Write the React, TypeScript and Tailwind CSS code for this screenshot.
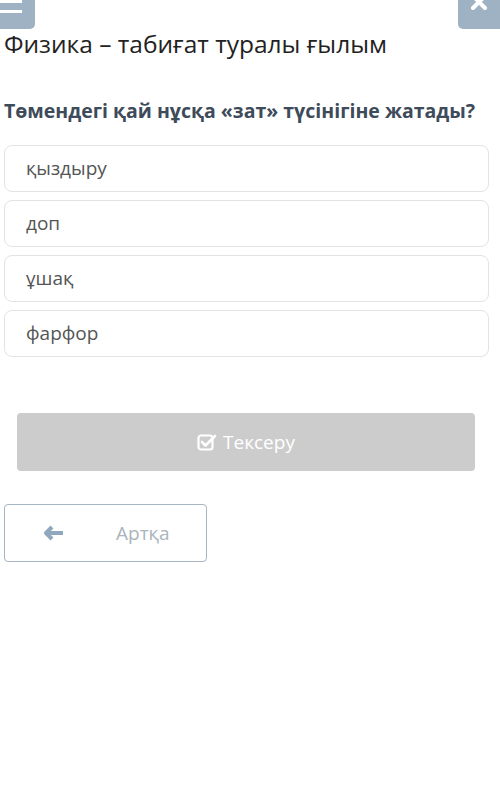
import React from "react";

export default function App() {
  const options = ["қыздыру", "доп", "ұшақ", "фарфор"];
  return (
    <div className="relative w-[500px] h-[786px] bg-white overflow-hidden" style={{ fontFamily: '"Open Sans", "Noto Sans", sans-serif' }}>
      <div className="absolute left-0 top-0 w-[35px] h-[29px] bg-[#9fb2c3] rounded-br-[5px]">
        <div className="absolute left-0 top-0 w-[22px] h-[3px] bg-white" />
        <div className="absolute left-0 top-[10px] w-[22px] h-[3px] bg-white" />
      </div>
      <div className="absolute right-0 top-0 w-[42px] h-[29px] bg-[#9fb2c3] rounded-bl-[5px] flex justify-center">
        <svg width="20" height="14" viewBox="0 0 20 14" className="mt-0">
          <path d="M4 -4 L16 8 M16 -4 L4 8" stroke="white" strokeWidth="4" strokeLinecap="round" />
        </svg>
      </div>

      <div className="pt-[28px] px-[4px]">
        <h1 className="text-[24.5px] leading-[32px] text-[#222] font-normal whitespace-nowrap">Физика – табиғат туралы ғылым</h1>
        <p className="mt-[38px] text-[19.5px] leading-[26px] font-bold text-[#3d4b5a] whitespace-nowrap">Төмендегі қай нұсқа «зат» түсінігіне жатады?</p>
        <div className="mt-[21px] flex flex-col gap-[8px] w-[485px]">
          {options.map((o) => (
            <div key={o} className="h-[47px] border border-[#e3e3e3] rounded-[8px] flex items-center pl-[21px] text-[19px] text-[#555]">
              {o}
            </div>
          ))}
        </div>
        <div className="mt-[56px] ml-[13px] w-[458px] h-[58px] bg-[#cccccc] rounded-[4px] flex items-center justify-center gap-[6px] text-white text-[19px]">
          <svg width="20" height="18" viewBox="0 0 20 18" fill="none">
            <rect x="1.5" y="2.5" width="14" height="14" rx="2.5" stroke="white" strokeWidth="2.2" />
            <path d="M5 9 L8.5 12.5 L18 3" stroke="white" strokeWidth="2.6" strokeLinecap="round" strokeLinejoin="round" />
          </svg>
          <span>Тексеру</span>
        </div>
        <div className="mt-[33px] w-[203px] h-[58px] border border-[#a5b5c4] rounded-[4px] flex items-center">
          <svg width="22" height="16" viewBox="0 0 22 16" className="ml-[38px]">
            <path d="M9 2 L3 8 L9 14 M3 8 L20 8" stroke="#90a8bd" strokeWidth="4" fill="none" strokeLinejoin="round" />
          </svg>
          <span className="ml-[51px] text-[19px] text-[#a9b4be]">Артқа</span>
        </div>
      </div>
    </div>
  );
}
